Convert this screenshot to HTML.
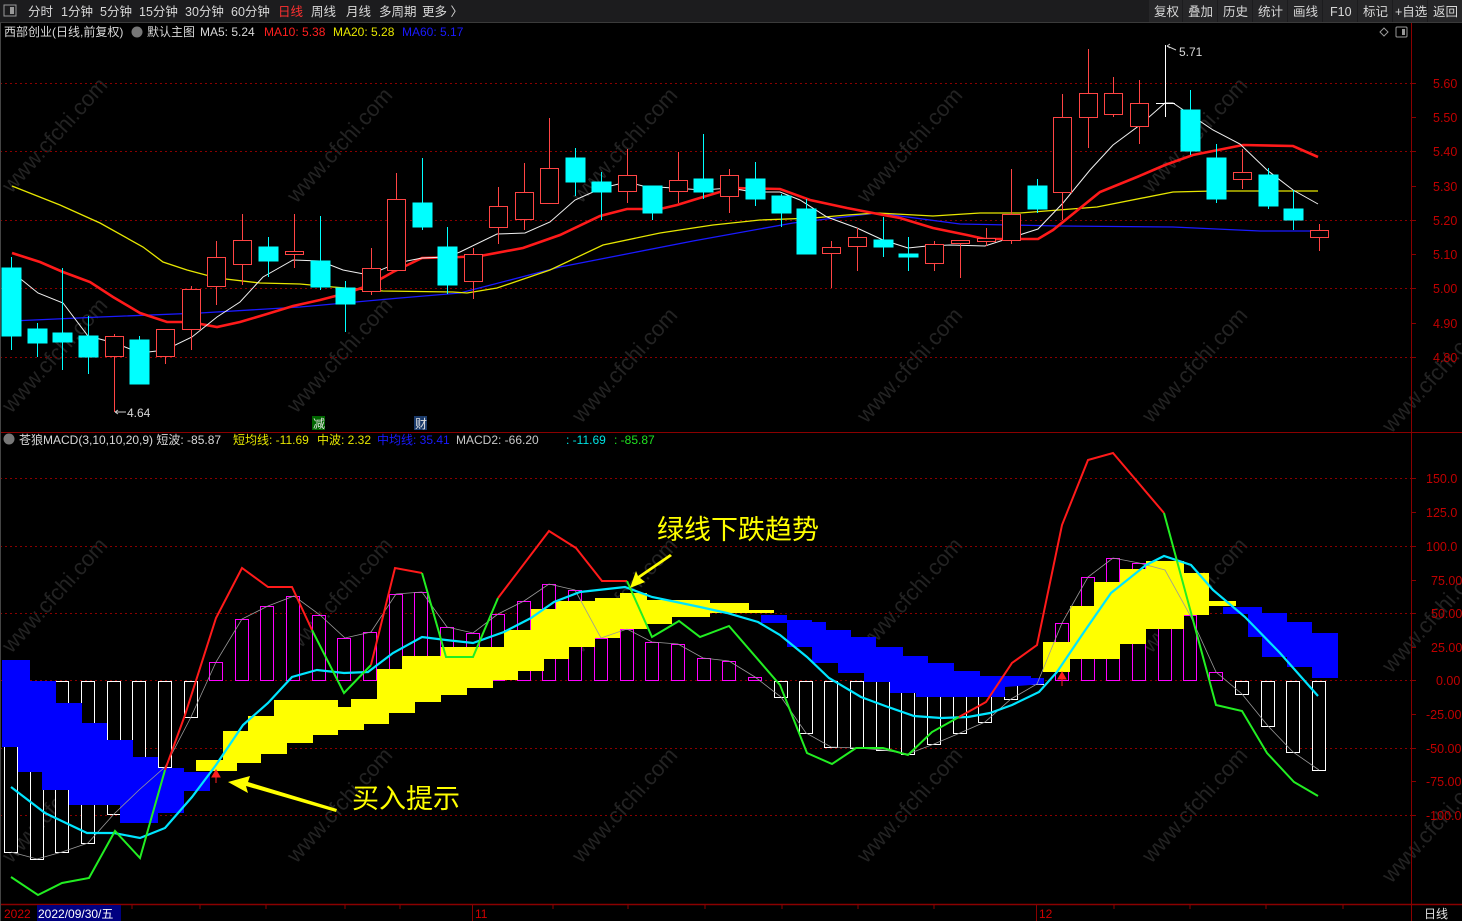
<!DOCTYPE html>
<html><head><meta charset="utf-8"><style>
body{margin:0;background:#000;width:1462px;height:921px;overflow:hidden;font-family:"Liberation Sans","Noto Sans CJK SC",sans-serif}
svg{position:absolute;left:0;top:0}
</style></head><body>
<svg width="1462" height="921" viewBox="0 0 1462 921" xmlns="http://www.w3.org/2000/svg" font-family="Liberation Sans, Noto Sans CJK SC, sans-serif">
<rect width="1462" height="921" fill="#000"/>
<!-- watermarks -->
<g fill="#232323" font-size="22" text-anchor="middle">
<g transform="translate(60,140) rotate(-48)"><text>www.cfchi.com</text></g>
<g transform="translate(345,150) rotate(-48)"><text>www.cfchi.com</text></g>
<g transform="translate(630,150) rotate(-48)"><text>www.cfchi.com</text></g>
<g transform="translate(915,150) rotate(-48)"><text>www.cfchi.com</text></g>
<g transform="translate(1200,140) rotate(-48)"><text>www.cfchi.com</text></g>
<g transform="translate(60,360) rotate(-48)"><text>www.cfchi.com</text></g>
<g transform="translate(345,360) rotate(-48)"><text>www.cfchi.com</text></g>
<g transform="translate(630,370) rotate(-48)"><text>www.cfchi.com</text></g>
<g transform="translate(915,370) rotate(-48)"><text>www.cfchi.com</text></g>
<g transform="translate(1200,370) rotate(-48)"><text>www.cfchi.com</text></g>
<g transform="translate(1440,380) rotate(-48)"><text>www.cfchi.com</text></g>
<g transform="translate(60,600) rotate(-48)"><text>www.cfchi.com</text></g>
<g transform="translate(345,600) rotate(-48)"><text>www.cfchi.com</text></g>
<g transform="translate(630,600) rotate(-48)"><text>www.cfchi.com</text></g>
<g transform="translate(915,600) rotate(-48)"><text>www.cfchi.com</text></g>
<g transform="translate(1200,600) rotate(-48)"><text>www.cfchi.com</text></g>
<g transform="translate(1440,620) rotate(-48)"><text>www.cfchi.com</text></g>
<g transform="translate(60,810) rotate(-48)"><text>www.cfchi.com</text></g>
<g transform="translate(345,810) rotate(-48)"><text>www.cfchi.com</text></g>
<g transform="translate(630,810) rotate(-48)"><text>www.cfchi.com</text></g>
<g transform="translate(915,810) rotate(-48)"><text>www.cfchi.com</text></g>
<g transform="translate(1200,810) rotate(-48)"><text>www.cfchi.com</text></g>
<g transform="translate(1440,830) rotate(-48)"><text>www.cfchi.com</text></g>
</g>

<!-- toolbar -->
<rect x="0" y="0" width="1462" height="22" fill="#1c1c1e"/>
<line x1="0" y1="22.5" x2="1462" y2="22.5" stroke="#3a3a3a"/>
<rect x="4" y="5" width="12" height="11" fill="none" stroke="#999" stroke-width="1"/>
<rect x="10" y="7" width="4" height="7" fill="#999"/>
<g font-size="12.5" fill="#d8d8d8">
<text x="28" y="16">分时</text><text x="61" y="16">1分钟</text><text x="100" y="16">5分钟</text><text x="139" y="16">15分钟</text><text x="185" y="16">30分钟</text><text x="231" y="16">60分钟</text>
<text x="278" y="16" fill="#ff3030">日线</text><text x="311" y="16">周线</text><text x="346" y="16">月线</text><text x="379" y="16">多周期</text><text x="422" y="16">更多 〉</text>
</g>
<g fill="#262628">
<rect x="1149" y="0" width="33" height="22"/><rect x="1183" y="0" width="34" height="22"/><rect x="1218" y="0" width="34" height="22"/><rect x="1253" y="0" width="34" height="22"/><rect x="1288" y="0" width="34" height="22"/><rect x="1323" y="0" width="34" height="22"/><rect x="1358" y="0" width="34" height="22"/><rect x="1393" y="0" width="34" height="22"/><rect x="1428" y="0" width="34" height="22"/>
</g>
<g font-size="12.5" fill="#d8d8d8">
<text x="1154" y="16">复权</text><text x="1188" y="16">叠加</text><text x="1223" y="16">历史</text><text x="1258" y="16">统计</text><text x="1293" y="16">画线</text><text x="1330" y="16">F10</text><text x="1363" y="16">标记</text><text x="1395" y="16">+自选</text><text x="1433" y="16">返回</text>
</g>

<!-- legend -->
<g font-size="12" fill="#d8d8d8">
<text x="4" y="36">西部创业(日线,前复权)</text>
<circle cx="137" cy="32" r="5.5" fill="#777"/>
<text x="147" y="36">默认主图</text>
<text x="200" y="36">MA5: 5.24</text>
<text x="264" y="36" fill="#ff2020">MA10: 5.38</text>
<text x="333" y="36" fill="#e6e600">MA20: 5.28</text>
<text x="402" y="36" fill="#1a1aff">MA60: 5.17</text>
</g>
<path d="M1384 28 L1388 32 L1384 36 L1380 32 Z" fill="none" stroke="#999"/>
<rect x="1396" y="27" width="11" height="10" rx="1" fill="none" stroke="#999"/><rect x="1402" y="29" width="3" height="6" fill="#999"/>

<!-- grid -->
<g stroke="#8a0000" stroke-dasharray="2,3" stroke-width="1">
<line x1="0" y1="83.5" x2="1411" y2="83.5"/><line x1="0" y1="151.5" x2="1411" y2="151.5"/><line x1="0" y1="220.5" x2="1411" y2="220.5"/><line x1="0" y1="288.5" x2="1411" y2="288.5"/><line x1="0" y1="357.5" x2="1411" y2="357.5"/>
<line x1="0" y1="478.5" x2="1411" y2="478.5"/><line x1="0" y1="546.5" x2="1411" y2="546.5"/><line x1="0" y1="613.5" x2="1411" y2="613.5"/><line x1="0" y1="680.5" x2="1411" y2="680.5"/><line x1="0" y1="748.5" x2="1411" y2="748.5"/><line x1="0" y1="815.5" x2="1411" y2="815.5"/>
</g>
<line x1="1411.5" y1="23" x2="1411.5" y2="921" stroke="#8a0000"/>
<line x1="0" y1="432.5" x2="1462" y2="432.5" stroke="#8a0000"/>
<line x1="0" y1="904.5" x2="1462" y2="904.5" stroke="#8a0000" stroke-width="1.5"/>
<line x1="0.5" y1="23" x2="0.5" y2="921" stroke="#444"/>
<g stroke="#8a0000">
<line x1="1411" y1="83.5" x2="1416" y2="83.5"/><line x1="1411" y1="117.5" x2="1416" y2="117.5"/><line x1="1411" y1="151.5" x2="1416" y2="151.5"/><line x1="1411" y1="186.5" x2="1416" y2="186.5"/><line x1="1411" y1="220.5" x2="1416" y2="220.5"/><line x1="1411" y1="254.5" x2="1416" y2="254.5"/><line x1="1411" y1="288.5" x2="1416" y2="288.5"/><line x1="1411" y1="323.5" x2="1416" y2="323.5"/><line x1="1411" y1="357.5" x2="1416" y2="357.5"/>
<line x1="1411" y1="478.5" x2="1416" y2="478.5"/><line x1="1411" y1="512.5" x2="1416" y2="512.5"/><line x1="1411" y1="546.5" x2="1416" y2="546.5"/><line x1="1411" y1="580.5" x2="1416" y2="580.5"/><line x1="1411" y1="613.5" x2="1416" y2="613.5"/><line x1="1411" y1="647.5" x2="1416" y2="647.5"/><line x1="1411" y1="680.5" x2="1416" y2="680.5"/><line x1="1411" y1="714.5" x2="1416" y2="714.5"/><line x1="1411" y1="748.5" x2="1416" y2="748.5"/><line x1="1411" y1="781.5" x2="1416" y2="781.5"/><line x1="1411" y1="815.5" x2="1416" y2="815.5"/>
</g>
<g font-size="12.5" fill="#c00000">
<text x="1433" y="88">5.60</text><text x="1433" y="122">5.50</text><text x="1433" y="156">5.40</text><text x="1433" y="191">5.30</text><text x="1433" y="225">5.20</text><text x="1433" y="259">5.10</text><text x="1433" y="293">5.00</text><text x="1433" y="328">4.90</text><text x="1433" y="362">4.80</text>
<text x="1426" y="483">150.0</text><text x="1426" y="517">125.0</text><text x="1426" y="551">100.0</text><text x="1431" y="585">75.00</text><text x="1431" y="618">50.00</text><text x="1431" y="652">25.00</text><text x="1436" y="685">0.00</text><text x="1426" y="719">-25.00</text><text x="1426" y="753">-50.00</text><text x="1426" y="786">-75.00</text><text x="1426" y="820">-100.0</text>
</g>

<!-- MA lines -->
<polyline fill="none" stroke="#1a1aff" stroke-width="1.3" points="12,321 100,317 200,313 300,307 400,298 460,293 560,267 693,241 793,223 877,213 960,224 1060,226 1173,227 1260,231 1318,231"/>
<polyline fill="none" stroke="#e6e600" stroke-width="1.3" points="12,186 60,205 100,223 143,247 163,262 187,270 217,278 260,283 300,284 333,287 383,291 453,292 467,293 497,288 550,270 603,245 660,233 713,225 760,220 813,218 847,215 877,213 933,216 980,213 1020,213 1097,207 1173,192 1213,191 1318,191"/>
<polyline fill="none" stroke="#ff1a1a" stroke-width="2.6" points="12,253 40,262 63,272 90,282 113,297 140,313 167,322 190,322 217,327 240,322 267,314 293,306 320,300 347,293 370,285 393,272 422,258 460,257 480,256 523,248 560,235 600,216 627,209 660,209 677,205 703,197 733,188 780,189 810,200 847,208 873,213 900,218 933,228 967,235 985,239 1038,239 1053,230 1100,192 1137,177 1165,165 1193,155 1243,145 1293,146 1318,157"/>
<polyline fill="none" stroke="#f0f0f0" stroke-width="1" points="12,272 38,293 63,303 88,336 115,343 140,353 165,350 192,337 217,317 240,302 263,277 293,260 320,261 343,270 369,275 397,263 422,258 447,257 460,252 497,234 525,233 550,222 575,200 602,188 627,182 643,186 673,188 703,190 730,188 753,192 780,192 800,200 827,217 857,228 883,240 908,248 927,246 950,245 985,246 1038,229 1063,203 1090,170 1113,145 1140,125 1165,103 1173,103 1213,130 1240,144 1267,170 1293,190 1318,204"/>

<!-- candles -->
<g stroke-width="1">
<g stroke="#00ffff" fill="#00ffff">
<line x1="11.5" y1="257" x2="11.5" y2="350"/><rect x="2" y="268" width="19" height="68"/>
<line x1="37.5" y1="323" x2="37.5" y2="357"/><rect x="28" y="329" width="19" height="14"/>
<line x1="62.5" y1="268" x2="62.5" y2="370"/><rect x="53" y="333" width="19" height="9"/>
<line x1="88.5" y1="316" x2="88.5" y2="374"/><rect x="79" y="336" width="19" height="21"/>
<line x1="139.5" y1="336" x2="139.5" y2="384"/><rect x="130" y="340" width="19" height="44"/>
<line x1="268.5" y1="237" x2="268.5" y2="277"/><rect x="259" y="247" width="19" height="14"/>
<line x1="320.5" y1="216" x2="320.5" y2="290"/><rect x="311" y="261" width="19" height="26"/>
<line x1="345.5" y1="281" x2="345.5" y2="332"/><rect x="336" y="288" width="19" height="16"/>
<line x1="422.5" y1="158" x2="422.5" y2="230"/><rect x="413" y="203" width="19" height="24"/>
<line x1="447.5" y1="227" x2="447.5" y2="294"/><rect x="438" y="247" width="19" height="38"/>
<line x1="575.5" y1="148" x2="575.5" y2="196"/><rect x="566" y="158" width="19" height="24"/>
<line x1="601.5" y1="172" x2="601.5" y2="220"/><rect x="592" y="182" width="19" height="10"/>
<line x1="652.5" y1="186" x2="652.5" y2="220"/><rect x="643" y="186" width="19" height="27"/>
<line x1="703.5" y1="134" x2="703.5" y2="199"/><rect x="694" y="179" width="19" height="13"/>
<line x1="755.5" y1="162" x2="755.5" y2="206"/><rect x="746" y="179" width="19" height="20"/>
<line x1="781.5" y1="194" x2="781.5" y2="227"/><rect x="772" y="196" width="19" height="17"/>
<line x1="806.5" y1="199" x2="806.5" y2="254"/><rect x="797" y="209" width="19" height="45"/>
<line x1="883.5" y1="217" x2="883.5" y2="257"/><rect x="874" y="240" width="19" height="7"/>
<line x1="908.5" y1="237" x2="908.5" y2="271"/><rect x="899" y="254" width="19" height="3"/>
<line x1="1037.5" y1="179" x2="1037.5" y2="213"/><rect x="1028" y="186" width="19" height="23"/>
<line x1="1190.5" y1="90" x2="1190.5" y2="155"/><rect x="1181" y="110" width="19" height="41"/>
<line x1="1216.5" y1="144" x2="1216.5" y2="203"/><rect x="1207" y="158" width="19" height="41"/>
<line x1="1268.5" y1="168" x2="1268.5" y2="209"/><rect x="1259" y="175" width="19" height="31"/>
<line x1="1293.5" y1="190" x2="1293.5" y2="230"/><rect x="1284" y="209" width="19" height="11"/>
</g>
<g stroke="#ff4444" fill="#000">
<line x1="114.5" y1="334" x2="114.5" y2="412"/><rect x="105.5" y="336.5" width="18" height="20"/>
<line x1="165.5" y1="329" x2="165.5" y2="364"/><rect x="156.5" y="329.5" width="18" height="27"/>
<line x1="191.5" y1="286" x2="191.5" y2="350"/><rect x="182.5" y="289.5" width="18" height="40"/>
<line x1="216.5" y1="241" x2="216.5" y2="305"/><rect x="207.5" y="257.5" width="18" height="29"/>
<line x1="242.5" y1="214" x2="242.5" y2="285"/><rect x="233.5" y="240.5" width="18" height="24"/>
<line x1="294.5" y1="214" x2="294.5" y2="268"/><rect x="285.5" y="251.5" width="18" height="3"/>
<line x1="371.5" y1="248" x2="371.5" y2="295"/><rect x="362.5" y="268.5" width="18" height="23"/>
<line x1="396.5" y1="173" x2="396.5" y2="271"/><rect x="387.5" y="199.5" width="18" height="71"/>
<line x1="473.5" y1="248" x2="473.5" y2="299"/><rect x="464.5" y="254.5" width="18" height="27"/>
<line x1="498.5" y1="187" x2="498.5" y2="244"/><rect x="489.5" y="206.5" width="18" height="21"/>
<line x1="524.5" y1="163" x2="524.5" y2="230"/><rect x="515.5" y="192.5" width="18" height="27"/>
<line x1="549.5" y1="118" x2="549.5" y2="204"/><rect x="540.5" y="168.5" width="18" height="35"/>
<line x1="627.5" y1="149" x2="627.5" y2="203"/><rect x="618.5" y="175.5" width="18" height="16"/>
<line x1="678.5" y1="152" x2="678.5" y2="203"/><rect x="669.5" y="180.5" width="18" height="11"/>
<line x1="729.5" y1="169" x2="729.5" y2="213"/><rect x="720.5" y="175.5" width="18" height="21"/>
<line x1="831.5" y1="241" x2="831.5" y2="288"/><rect x="822.5" y="247.5" width="18" height="6"/>
<line x1="857.5" y1="228" x2="857.5" y2="271"/><rect x="848.5" y="237.5" width="18" height="9"/>
<line x1="934.5" y1="241" x2="934.5" y2="271"/><rect x="925.5" y="244.5" width="18" height="19"/>
<line x1="960.5" y1="240" x2="960.5" y2="278"/><rect x="951.5" y="240.5" width="18" height="3"/>
<line x1="986.5" y1="228" x2="986.5" y2="246"/><rect x="977.5" y="238.5" width="18" height="3"/>
<line x1="1011.5" y1="169" x2="1011.5" y2="244"/><rect x="1002.5" y="214.5" width="18" height="26"/>
<line x1="1062.5" y1="94" x2="1062.5" y2="220"/><rect x="1053.5" y="117.5" width="18" height="75"/>
<line x1="1088.5" y1="49" x2="1088.5" y2="148"/><rect x="1079.5" y="93.5" width="18" height="24"/>
<line x1="1113.5" y1="77" x2="1113.5" y2="117"/><rect x="1104.5" y="93.5" width="18" height="21"/>
<line x1="1139.5" y1="80" x2="1139.5" y2="144"/><rect x="1130.5" y="103.5" width="18" height="23"/>
<line x1="1242.5" y1="149" x2="1242.5" y2="189"/><rect x="1233.5" y="172.5" width="18" height="7"/>
<line x1="1319.5" y1="224" x2="1319.5" y2="251"/><rect x="1310.5" y="230.5" width="18" height="7"/>
</g>
<g stroke="#fff"><line x1="1165.5" y1="45" x2="1165.5" y2="117"/><line x1="1156" y1="103.5" x2="1175" y2="103.5"/></g>
</g>
<g font-size="12" fill="#d8d8d8"><text x="1179" y="56">5.71</text><text x="127" y="417">4.64</text></g>
<path d="M1167 46 L1176 50" stroke="#ccc" fill="none"/><path d="M1167 46 l3 -2 M1167 46 l3 2" stroke="#ccc"/>
<path d="M115 412 L126 412 M115 412 l3 -2 M115 412 l3 2" stroke="#ccc" fill="none"/>
<rect x="312" y="416" width="13" height="14" fill="#006600"/><text x="313" y="428" font-size="12" fill="#e0e0e0">减</text>
<rect x="414" y="416" width="13" height="14" fill="#1a3a6a"/><text x="415" y="428" font-size="12" fill="#e0e0e0">财</text>

<!-- MACD legend -->
<circle cx="9" cy="439" r="5.5" fill="#777"/>
<g font-size="12" fill="#d8d8d8">
<text x="19" y="444">苍狼MACD(3,10,10,20,9) 短波: -85.87</text>
<text x="233" y="444" fill="#e6e600">短均线: -11.69</text>
<text x="317" y="444" fill="#e6e600">中波: 2.32</text>
<text x="377" y="444" fill="#1a1aff">中均线: 35.41</text>
<text x="456" y="444" fill="#c8c8c8">MACD2: -66.20</text>
<text x="566" y="444" fill="#00e0e0">: -11.69</text>
<text x="614" y="444" fill="#20e020">: -85.87</text>
</g>

<!-- histogram -->
<g fill="#000" stroke-width="1">
<g stroke="#fff">
<rect x="4.5" y="681.5" width="13" height="171"/><rect x="30.5" y="681.5" width="13" height="178"/><rect x="55.5" y="681.5" width="13" height="171"/><rect x="81.5" y="681.5" width="13" height="162"/><rect x="107.5" y="681.5" width="13" height="133"/><rect x="132.5" y="681.5" width="13" height="109"/><rect x="158.5" y="681.5" width="13" height="86"/><rect x="184.5" y="681.5" width="13" height="36"/>
<rect x="774.5" y="681.5" width="13" height="16"/><rect x="799.5" y="681.5" width="13" height="52"/><rect x="824.5" y="681.5" width="13" height="66"/><rect x="850.5" y="681.5" width="13" height="67"/><rect x="876.5" y="681.5" width="13" height="69"/><rect x="901.5" y="681.5" width="13" height="73"/><rect x="927.5" y="681.5" width="13" height="63"/><rect x="953.5" y="681.5" width="13" height="52"/><rect x="978.5" y="681.5" width="13" height="41"/><rect x="1004.5" y="681.5" width="13" height="18"/><rect x="1030.5" y="681.5" width="13" height="3"/>
<rect x="1235.5" y="681.5" width="13" height="13"/><rect x="1261.5" y="681.5" width="13" height="45"/><rect x="1286.5" y="681.5" width="13" height="71"/><rect x="1312.5" y="681.5" width="13" height="89"/>
</g>
<g stroke="#ff00ff">
<rect x="209.5" y="662.5" width="13" height="18"/><rect x="235.5" y="619.5" width="13" height="61"/><rect x="260.5" y="606.5" width="13" height="74"/><rect x="286.5" y="596.5" width="13" height="84"/><rect x="312.5" y="615.5" width="13" height="65"/><rect x="337.5" y="638.5" width="13" height="42"/><rect x="363.5" y="632.5" width="13" height="48"/><rect x="389.5" y="594.5" width="13" height="86"/><rect x="414.5" y="592.5" width="13" height="88"/><rect x="440.5" y="627.5" width="13" height="53"/><rect x="466.5" y="633.5" width="13" height="47"/><rect x="491.5" y="614.5" width="13" height="66"/><rect x="517.5" y="601.5" width="13" height="79"/><rect x="542.5" y="584.5" width="13" height="96"/><rect x="568.5" y="590.5" width="13" height="90"/><rect x="594.5" y="638.5" width="13" height="42"/><rect x="620.5" y="629.5" width="13" height="51"/><rect x="645.5" y="642.5" width="13" height="38"/><rect x="671.5" y="644.5" width="13" height="36"/><rect x="697.5" y="658.5" width="13" height="22"/><rect x="722.5" y="661.5" width="13" height="19"/><rect x="748.5" y="677.5" width="13" height="3"/>
<rect x="1055.5" y="623.5" width="13" height="57"/><rect x="1081.5" y="577.5" width="13" height="103"/><rect x="1106.5" y="558.5" width="13" height="122"/><rect x="1132.5" y="563.5" width="13" height="117"/><rect x="1158.5" y="570.5" width="13" height="110"/><rect x="1183.5" y="615.5" width="13" height="65"/><rect x="1209.5" y="672.5" width="13" height="8"/>
</g>
</g>

<!-- bands -->
<path fill="#0000ff" d="M2,660 L30,660 L30,681 L56,681 L56,703 L82,703 L82,723 L107,723 L107,740 L133,740 L133,757 L158,757 L158,768 L184,768 L184,772 L210,772 L210,791 L184,791 L184,813 L158,813 L158,823 L120,823 L120,805 L69,805 L69,790 L42,790 L42,772 L18,772 L18,747 L2,747 Z"/>
<path fill="#ffff00" d="M196,760 L223,760 L223,731 L248,731 L248,716 L274,716 L274,700 L338,700 L338,707 L351,707 L351,699 L377,699 L377,669 L402,669 L402,656 L441,656 L441,647 L504,647 L504,630 L531,630 L531,609 L556,609 L556,601 L595,601 L595,598 L620,598 L620,593 L647,593 L647,600 L710,600 L710,603 L749,603 L749,610 L774,610 L774,613 L710,613 L710,617 L672,617 L672,624 L647,624 L647,629 L620,629 L620,638 L595,638 L595,647 L569,647 L569,659 L544,659 L544,671 L518,671 L518,680 L493,680 L493,688 L467,688 L467,695 L441,695 L441,702 L415,702 L415,713 L389,713 L389,724 L364,724 L364,730 L338,730 L338,735 L313,735 L313,743 L287,743 L287,754 L261,754 L261,763 L237,763 L237,771 L196,771 Z"/>
<path fill="#0000ff" d="M761,615 L787,615 L787,620 L812,620 L812,622 L826,622 L826,630 L851,630 L851,637 L876,637 L876,647 L903,647 L903,656 L928,656 L928,663 L954,663 L954,671 L980,671 L980,676 L1031,676 L1031,678 L1044,678 L1044,684 L1005,687 L1005,697 L916,697 L916,693 L890,693 L890,682 L864,682 L864,673 L838,673 L838,663 L812,663 L812,647 L787,647 L787,623 L761,623 Z"/>
<g fill="#ffff00">
<rect x="1043" y="642" width="27" height="30"/><rect x="1070" y="606" width="24" height="53"/><rect x="1094" y="582" width="26" height="77"/><rect x="1120" y="569" width="26" height="75"/><rect x="1146" y="561" width="38" height="68"/><rect x="1184" y="573" width="25" height="42"/><rect x="1209" y="601" width="27" height="5"/>
</g>
<g fill="#0000ff">
<rect x="1223" y="607" width="39" height="7"/><rect x="1248" y="607" width="14" height="30"/><rect x="1262" y="613" width="25" height="44"/><rect x="1287" y="622" width="25" height="45"/><rect x="1312" y="633" width="26" height="45"/>
</g>

<!-- grey hist line -->
<polyline fill="none" stroke="#9a9a9a" stroke-width="0.8" points="11,852 37,859 62,852 88,843 114,814 139,790 165,767 191,717 216,662 242,619 268,606 294,596 320,615 345,638 371,632 396,594 422,592 447,627 473,633 498,614 524,601 549,584 575,590 601,638 627,629 652,642 678,644 703,658 729,661 755,677 781,697 806,733 831,747 857,748 883,750 908,754 934,744 960,733 985,722 1011,699 1037,684 1062,623 1088,577 1113,558 1139,563 1165,570 1190,615 1216,672 1242,694 1268,726 1293,752 1319,770"/>

<!-- cyan -->
<polyline fill="none" stroke="#00e5ff" stroke-width="2.2" points="11,787 45,813 87,833 114,833 140,838 165,828 192,797 216,765 243,725 268,703 292,677 317,670 344,673 368,672 393,653 422,637 446,640 473,643 504,632 531,618 554,602 580,592 625,587 652,597 700,607 727,613 758,622 780,635 807,657 829,678 861,697 888,707 914,716 941,718 968,717 990,713 1012,705 1039,692 1057,672 1084,632 1111,593 1146,565 1164,556 1191,565 1213,590 1245,617 1280,653 1318,696"/>
<!-- red/green -->
<g fill="none" stroke-width="2">
<polyline stroke="#22ee22" points="11,877 38,895 62,883 89,878 115,831 140,858 165,770"/>
<polyline stroke="#ff1a1a" points="165,770 185,715 216,618 242,568 268,587 292,587 312,630"/>
<polyline stroke="#22ee22" points="312,630 344,693 371,665"/>
<polyline stroke="#ff1a1a" points="371,665 395,568 422,573"/>
<polyline stroke="#22ee22" points="422,573 446,657 473,657 498,598"/>
<polyline stroke="#ff1a1a" points="498,598 549,531 576,548 602,581 627,581"/>
<polyline stroke="#22ee22" points="627,581 652,637 679,621 700,637 729,626 780,685 807,753 832,764 856,748 883,748 908,755 932,732 959,717"/>
<polyline stroke="#ff1a1a" points="959,717 986,702 1012,663 1037,645 1062,525 1088,460 1113,453 1164,513"/>
<polyline stroke="#22ee22" points="1164,513 1216,705 1242,711 1267,753 1294,782 1318,796"/>
</g>
<!-- red arrows -->
<g stroke="#ff2020" fill="#ff2020"><line x1="216" y1="776" x2="216" y2="783"/><path d="M212 777 L216 770 L220 777 Z"/><line x1="1062" y1="678" x2="1062" y2="686"/><path d="M1058 679 L1062 672 L1066 679 Z"/></g>

<!-- annotations -->
<g fill="#ffff00">
<path d="M336 812 L246 786 L248 793 L228 782 L250 776 L248 782 L337 809 Z"/>
<path d="M672 556 L640 578 L645 582 L630 588 L636 571 L638 576 L670 554 Z"/>
</g>
<g font-size="27" fill="#ffff00"><text x="657" y="539">绿线下跌趋势</text><text x="352" y="808">买入提示</text></g>

<!-- time axis -->
<g stroke="#8a0000"><line x1="472.5" y1="905" x2="472.5" y2="921"/><line x1="1036.5" y1="905" x2="1036.5" y2="921"/>
<line x1="49" y1="905" x2="49" y2="909"/><line x1="95" y1="905" x2="95" y2="909"/><line x1="132" y1="905" x2="132" y2="909"/><line x1="200" y1="905" x2="200" y2="909"/><line x1="266" y1="905" x2="266" y2="909"/><line x1="345" y1="905" x2="345" y2="909"/><line x1="400" y1="905" x2="400" y2="909"/><line x1="553" y1="905" x2="553" y2="909"/><line x1="628" y1="905" x2="628" y2="909"/><line x1="705" y1="905" x2="705" y2="909"/><line x1="782" y1="905" x2="782" y2="909"/><line x1="858" y1="905" x2="858" y2="909"/><line x1="934" y1="905" x2="934" y2="909"/><line x1="1114" y1="905" x2="1114" y2="909"/><line x1="1190" y1="905" x2="1190" y2="909"/><line x1="1266" y1="905" x2="1266" y2="909"/><line x1="1343" y1="905" x2="1343" y2="909"/></g>
<rect x="37" y="905" width="84" height="16" fill="#000080"/>
<g font-size="12"><text x="4" y="918" fill="#d00000">2022</text><text x="38" y="918" fill="#fff">2022/09/30/五</text><text x="475" y="918" fill="#d00000">11</text><text x="1039" y="918" fill="#d00000">12</text><text x="1424" y="918" fill="#e0e0e0">日线</text></g>
</svg>
</body></html>
